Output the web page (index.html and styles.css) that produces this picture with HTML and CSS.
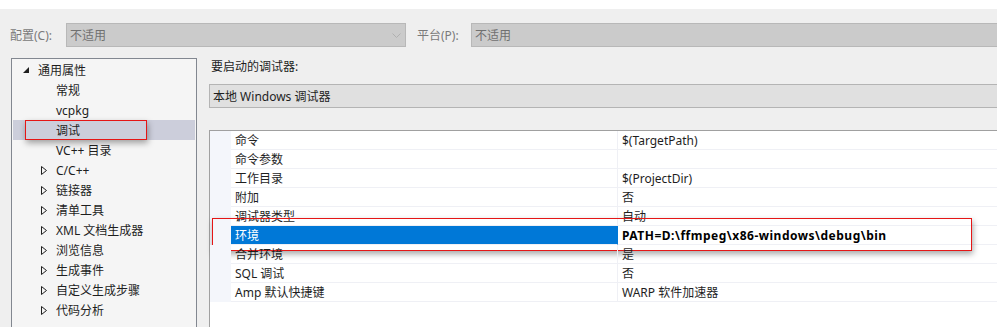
FILE: index.html
```html
<!DOCTYPE html>
<html lang="zh-CN">
<head>
    <meta charset="UTF-8">
    <title>调试属性</title>
    <link rel="stylesheet" href="styles.css">
</head>
<body>
    <div class="topstrip"></div>

    <div class="toolbar">
        <span class="tlabel">配置(C):</span>
        <div class="combo combo-config">
            <span>不适用</span>
            <svg class="chev" width="9" height="6" viewBox="0 0 9 6"><path d="M0.5 0.5 L4.5 4.5 L8.5 0.5" fill="none" stroke="#b0b0b0" stroke-width="1"/></svg>
        </div>
        <span class="tlabel plat">平台(P):</span>
        <div class="combo combo-plat"><span>不适用</span></div>
    </div>

    <div class="main">
        <div class="tree">
            <div class="node root">
                <svg class="exp" width="6" height="6" viewBox="0 0 6 6"><path d="M6 0 L6 6 L0 6 Z" fill="#1e1e1e"/></svg>
                <span>通用属性</span>
            </div>
            <div class="node child"><span>常规</span></div>
            <div class="node child"><span>vcpkg</span></div>
            <div class="node child sel"><span>调试</span><div class="mark mark-tree"></div></div>
            <div class="node child"><span>VC++ 目录</span></div>
            <div class="node child coll"><svg class="col" width="6" height="9" viewBox="0 0 6 9"><path d="M0.5 0.5 L5.5 4.5 L0.5 8.5 Z" fill="none" stroke="#1e1e1e"/></svg><span>C/C++</span></div>
            <div class="node child coll"><svg class="col" width="6" height="9" viewBox="0 0 6 9"><path d="M0.5 0.5 L5.5 4.5 L0.5 8.5 Z" fill="none" stroke="#1e1e1e"/></svg><span>链接器</span></div>
            <div class="node child coll"><svg class="col" width="6" height="9" viewBox="0 0 6 9"><path d="M0.5 0.5 L5.5 4.5 L0.5 8.5 Z" fill="none" stroke="#1e1e1e"/></svg><span>清单工具</span></div>
            <div class="node child coll"><svg class="col" width="6" height="9" viewBox="0 0 6 9"><path d="M0.5 0.5 L5.5 4.5 L0.5 8.5 Z" fill="none" stroke="#1e1e1e"/></svg><span>XML 文档生成器</span></div>
            <div class="node child coll"><svg class="col" width="6" height="9" viewBox="0 0 6 9"><path d="M0.5 0.5 L5.5 4.5 L0.5 8.5 Z" fill="none" stroke="#1e1e1e"/></svg><span>浏览信息</span></div>
            <div class="node child coll"><svg class="col" width="6" height="9" viewBox="0 0 6 9"><path d="M0.5 0.5 L5.5 4.5 L0.5 8.5 Z" fill="none" stroke="#1e1e1e"/></svg><span>生成事件</span></div>
            <div class="node child coll"><svg class="col" width="6" height="9" viewBox="0 0 6 9"><path d="M0.5 0.5 L5.5 4.5 L0.5 8.5 Z" fill="none" stroke="#1e1e1e"/></svg><span>自定义生成步骤</span></div>
            <div class="node child coll"><svg class="col" width="6" height="9" viewBox="0 0 6 9"><path d="M0.5 0.5 L5.5 4.5 L0.5 8.5 Z" fill="none" stroke="#1e1e1e"/></svg><span>代码分析</span></div>
        </div>

        <div class="content">
            <div class="dlabel">要启动的调试器:</div>
            <div class="debugger">本地 Windows 调试器</div>

            <div class="grid">
                <div class="row"><div class="gut"></div><div class="name">命令</div><div class="val">$(TargetPath)</div></div>
                <div class="row"><div class="gut"></div><div class="name">命令参数</div><div class="val"></div></div>
                <div class="row"><div class="gut"></div><div class="name">工作目录</div><div class="val">$(ProjectDir)</div></div>
                <div class="row"><div class="gut"></div><div class="name">附加</div><div class="val">否</div></div>
                <div class="row"><div class="gut"></div><div class="name">调试器类型</div><div class="val">自动</div></div>
                <div class="row active"><div class="gut"></div><div class="name">环境</div><div class="val bold">PATH=D:\ffmpeg\x86-windows\debug\bin</div><div class="mark mark-env"></div></div>
                <div class="row"><div class="gut"></div><div class="name">合并环境</div><div class="val">是</div></div>
                <div class="row"><div class="gut"></div><div class="name">SQL 调试</div><div class="val">否</div></div>
                <div class="row"><div class="gut"></div><div class="name">Amp 默认快捷键</div><div class="val">WARP 软件加速器</div></div>
            </div>
        </div>
    </div>
</body>
</html>
```

FILE: styles.css
```css
/* base */
body {
    margin: 0;
    height: 327px;
    overflow: hidden;
    background: #efefef;
    font-family: "Noto Sans", "Noto Sans CJK SC", sans-serif;
    font-size: 12px;
    color: #1e1e1e;
}

.topstrip {
    height: 9px;
    background: #ffffff;
}

/* configuration / platform bar */
.toolbar {
    display: flex;
    align-items: center;
    padding-top: 14px;
    height: 24px;
}

.tlabel {
    color: #7a7a7a;
    padding-left: 10px;
    width: 56px;
}

.tlabel.plat {
    padding-left: 11px;
    width: 54px;
}

.combo {
    box-sizing: border-box;
    height: 24px;
    background: #cbcbcb;
    border: 1px solid #b8b8b8;
    color: #707070;
    display: flex;
    align-items: center;
    padding-left: 3px;
}

.combo-config {
    width: 340px;
    position: relative;
}

.combo-config .chev {
    position: absolute;
    right: 4px;
    top: 9px;
}

.combo-plat {
    flex: 1;
    border-right: none;
}

/* layout below */
.main {
    display: flex;
    margin-top: 11px;
}

/* tree on the left */
.tree {
    box-sizing: border-box;
    margin-left: 11px;
    width: 186px;
    height: 280px;
    background: #f5f5f5;
    border: 1px solid #828790;
    padding: 1px 1px 0 1px;
}

.node {
    position: relative;
    height: 20px;
    display: flex;
    align-items: center;
}

.node.root .exp {
    margin-left: 10px;
    margin-right: 9px;
}

.node.child {
    padding-left: 43px;
}

.node.coll {
    padding-left: 28px;
}

.node.coll .col {
    margin-right: 9px;
}

.node.sel {
    background: #cccedb;
}

/* red marks */
.mark {
    position: absolute;
    border: 1px solid #e51616;
    box-shadow: 1px 3px 6px rgba(0, 0, 0, 0.35);
    pointer-events: none;
}

.mark-tree {
    left: 12px;
    top: 0;
    width: 120px;
    height: 18px;
}

/* right side */
.content {
    flex: 1;
    margin-left: 12px;
}

.dlabel {
    height: 18px;
    line-height: 16px;
    padding-left: 2px;
    margin-top: 1px;
}

.debugger {
    box-sizing: border-box;
    height: 24px;
    margin-top: 7px;
    background: #e0e0e0;
    border: 1px solid #b4b4b4;
    border-right: none;
    padding-left: 3px;
    display: flex;
    align-items: center;
    color: #1e1e1e;
}

.grid {
    margin-top: 22px;
    height: 200px;
    background: #ffffff;
    border-top: 1px solid #a0a0a0;
    border-left: 1px solid #a0a0a0;
}

.row {
    position: relative;
    display: flex;
    height: 19px;
}

.gut {
    width: 21px;
    background: #f4f6fb;
}

.name {
    box-sizing: border-box;
    width: 387px;
    padding-left: 4px;
    line-height: 20px;
    border-bottom: 1px solid #eff0f5;
    border-right: 1px solid #eff0f5;
}

.val {
    flex: 1;
    padding-left: 4px;
    line-height: 20px;
    border-bottom: 1px solid #eff0f5;
}

.val.bold {
    font-weight: bold;
    color: #000;
    letter-spacing: 0.5px;
}

.row.active .name {
    background: #0078d7;
    color: #ffffff;
    border-right-color: #0078d7;
}

.mark-env {
    left: 2px;
    top: -8px;
    width: 758px;
    height: 31px;
}
```
